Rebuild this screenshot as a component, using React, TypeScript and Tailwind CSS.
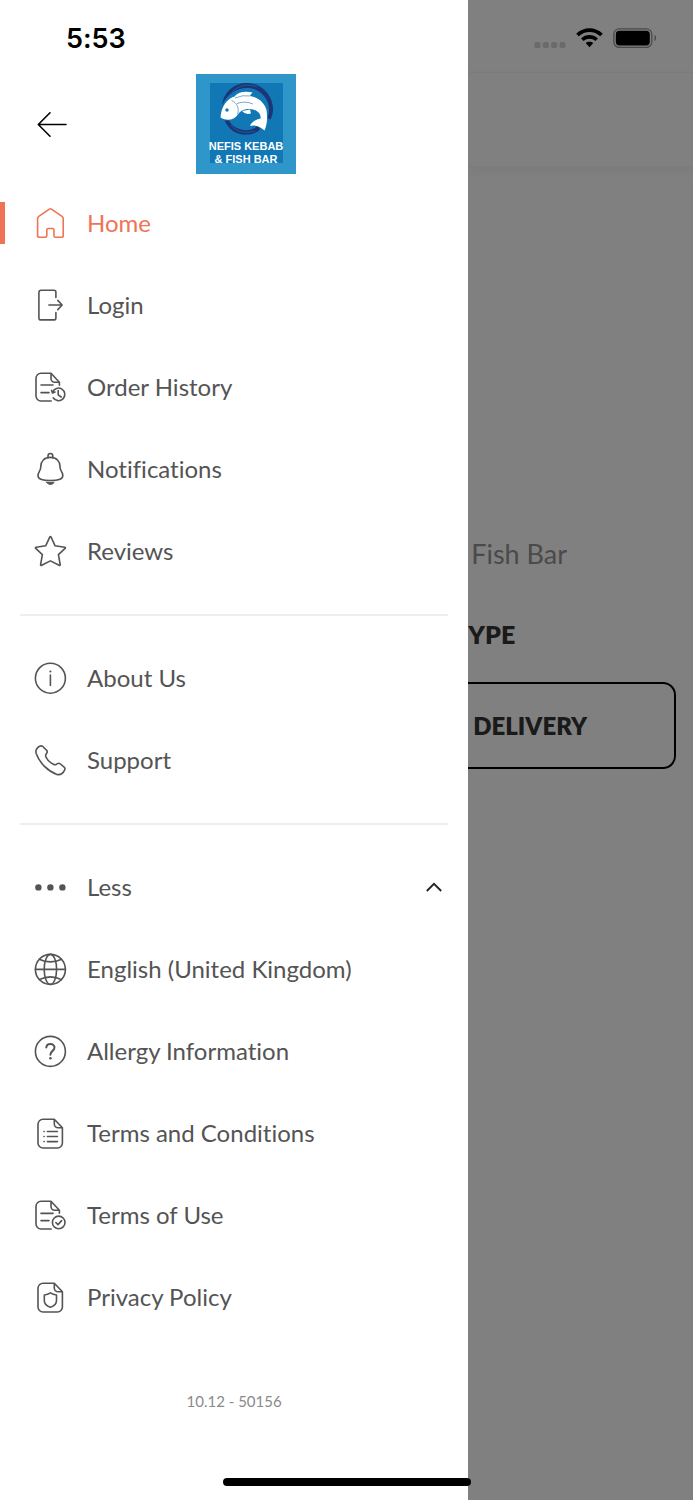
import { useState } from "react";
import type { ReactNode } from "react";

type MenuItem = {
    label: string
    icon: ReactNode
}

const foldedDoc = "M17.2 30H7A5 5 0 0 1 2 25V7.3A5 5 0 0 1 7 2.3H17L25.4 11.2V14.2M17 2.3V7.5A3.7 3.7 0 0 0 20.7 11.2H25.4"
const wholeDoc = "M20.3 2.3H9A5 5 0 0 0 4 7.3V26A5 5 0 0 0 9 31H23.4A5 5 0 0 0 28.4 26V10.8ZM20.3 2.3V7A3.8 3.8 0 0 0 24.1 10.8H28.4"

const Icon = ({ children }: { children: ReactNode }) => (
    <svg viewBox="0 0 32 32" className="w-8 h-8 shrink-0 overflow-visible" fill="none" stroke="currentColor" strokeWidth="1.6" strokeLinecap="round" strokeLinejoin="round" aria-hidden="true">
        {children}
    </svg>
)

const HomeIcon = () => (
    <Icon>
        <path d="M15.3 2.2Q16.4 1.4 17.5 2.2L28 9.4Q29.2 10.2 29.2 11.7V28.5Q29.2 30.3 27.5 30.3H21.5Q20 30.3 20 28.8V23Q20 21.5 18.5 21.5H14.3Q12.8 21.5 12.8 23V28.8Q12.8 30.3 11.3 30.3H5.3Q3.6 30.3 3.6 28.5V11.7Q3.6 10.2 4.8 9.4Z"/>
    </Icon>
)

const LoginIcon = () => (
    <Icon>
        <path d="M21.9 8.5V3.3A2 2 0 0 0 19.9 1.3H6.9A2 2 0 0 0 4.9 3.3V28.9A2 2 0 0 0 6.9 30.9H19.9A2 2 0 0 0 21.9 28.9V23.6"/>
        <path d="M14.9 16H28M23.8 11.4L28.1 16L23.8 20.6"/>
    </Icon>
)

const HistoryIcon = () => (
    <Icon>
        <path d={foldedDoc}/>
        <path d="M7 14H19M7 21.6H15"/>
        <path d="M18.6 21.2A6.3 6.3 0 1 1 19.2 26.8M17.6 19.4L18.5 21.9L21 21.1M24.2 19.5V23.8L27.2 26"/>
    </Icon>
)

const BellIcon = () => (
    <Icon>
        <path d="M14 4.8V2.9A2.4 2.4 0 0 1 18.8 2.9V4.8"/>
        <path d="M16.4 4.4C10.3 4.4 6.8 8.4 6.8 13.4C6.8 18.5 4 18.6 4 22.7C4 26 7.6 27.5 16.4 27.5C25.2 27.5 28.8 26 28.8 22.7C28.8 18.6 26 18.5 26 13.4C26 8.4 22.5 4.4 16.4 4.4Z"/>
        <path d="M12.6 29.4H20.2Q18.6 31.4 16.4 31.4Q14.2 31.4 12.6 29.4Z" fill="currentColor" strokeWidth="1"/>
    </Icon>
)

const StarIcon = () => (
    <Icon>
        <path d="M15.7 2.2Q16.4 0.9 17.1 2.2L21.1 10.8L30.7 12.2Q31.9 12.5 31.1 13.4L24.4 19.7L26.2 29.5Q26.3 30.8 25.1 30.3L16.4 25.9L7.7 30.3Q6.5 30.8 6.6 29.5L8.4 19.7L1.7 13.4Q0.9 12.5 2.1 12.2L11.7 10.8Z"/>
    </Icon>
)

const InfoIcon = () => (
    <Icon>
        <circle cx="16.4" cy="16.2" r="15"/>
        <path d="M16.4 13V23.4"/>
        <circle cx="16.4" cy="9.5" r="1.1" fill="currentColor" stroke="none"/>
    </Icon>
)

const PhoneIcon = () => (
    <Icon>
        <path d="M5.6 2.2Q7.4 1.3 8.8 2.5L12.5 6.2Q13.8 7.4 12.8 9L11.9 10.6Q11.3 11.7 12 13.1C13.5 16.2 16 18.6 19.4 20.3Q20.7 21 21.9 20.5L23.6 19.6Q25.2 18.8 26.4 20L30.4 23.4Q31.5 24.5 30.6 26.1C29 29.3 26.3 31.4 22.9 30.4C14 27.2 5.6 19 2.3 9.7C1.3 6.6 2.6 3.9 5.6 2.2Z"/>
    </Icon>
)

const DotsIcon = () => (
    <Icon>
        <g fill="currentColor" stroke="none">
            <circle cx="4.4" cy="16.4" r="3.2"/>
            <circle cx="16.4" cy="16.4" r="3.2"/>
            <circle cx="28.4" cy="16.4" r="3.2"/>
        </g>
    </Icon>
)

const GlobeIcon = () => (
    <Icon>
        <circle cx="16.4" cy="16.4" r="15"/>
        <ellipse cx="16.4" cy="16.4" rx="6.2" ry="15"/>
        <path d="M1.4 16.4H31.4M5.2 6.2Q16.4 11.6 27.6 6.2M5.2 26.6Q16.4 21.2 27.6 26.6"/>
    </Icon>
)

const QuestionIcon = () => (
    <Icon>
        <circle cx="16.4" cy="16.4" r="15"/>
        <path d="M12.3 12.4C12.5 10.4 14.2 9 16.4 9C18.7 9 20.5 10.5 20.5 12.6C20.5 16 16.4 15.8 16.4 19.7" strokeWidth="2"/>
        <circle cx="16.4" cy="23.3" r="1.3" fill="currentColor" stroke="none"/>
    </Icon>
)

const ListDocIcon = () => (
    <Icon>
        <path d={wholeDoc}/>
        <path d="M13.4 14.5H23.4M13.4 19.5H23.4M13.4 24.6H23.4M10 14.5H10.2M10 19.5H10.2M10 24.6H10.2"/>
    </Icon>
)

const CheckDocIcon = () => (
    <Icon>
        <path d={foldedDoc}/>
        <path d="M7 14.4H19M7 21.6H15"/>
        <circle cx="24.7" cy="23.4" r="6.3"/>
        <path d="M21.9 23.6L24 25.6L27.6 21.6"/>
    </Icon>
)

const ShieldDocIcon = () => (
    <Icon>
        <path d={wholeDoc}/>
        <path d="M16.4 11.9Q19 13.8 22.5 14V19.5C22.5 23 20.3 25 16.4 26.3C12.5 25 10.3 23 10.3 19.5V14Q13.8 13.8 16.4 11.9Z"/>
    </Icon>
)

const Logo = () => (
    <div className="relative w-[100px] h-[100px] shrink-0 bg-[#2e96c8] flex flex-col justify-end pb-2">
        <svg viewBox="0 0 100 100" className="absolute inset-0 w-full h-full" aria-hidden="true">
            <rect x="14" y="9" width="73" height="80" fill="#1178b5"/>
            {/* brush ring */}
            <path d="M26 31C28 17 39 9 51 9C65 9 77 21 77 35C77 39 76 43 74.5 45.5L71.5 44C74 38 73.5 30 69.5 24C65 17 58 13.5 50 14C39 14.5 31 21 26 31Z" fill="#1c3576"/>
            <path d="M28.5 46.5C33 57 43 61.5 51 60.5C57 60.5 61 58.5 64 55.5L62.5 51.5C57 56 51 57 45 55.5C39 54 35 50.5 33 46.5Z" fill="#1c3576"/>
            <path d="M36 18C43 11 52 9 61 13" fill="none" stroke="#1178b5" strokeWidth="0.6"/>
            <path d="M35 51C40 58 49 60 59 57" fill="none" stroke="#1178b5" strokeWidth="0.6"/>
            {/* fish */}
            <path d="M24.5 43.5C25 33 31 24.5 38.5 22.5C41.5 18.5 48 16.5 56.5 18.5Q54.5 20 54 22C63 23.5 68.5 29 70.5 36C71.5 42 71.5 50 68.5 56.5C65 53.5 59 50 54 52C55.5 47.5 60 45.5 64.5 44.5C65.5 40 61 35.5 53.5 35C48 35 44.5 36.5 42 40.5C38 46 31 47.5 24.5 43.5Z" fill="#fff"/>
            <path d="M46 37Q49 41 55 39.5L54 35.5Z" fill="#fff"/>
            <path d="M35.5 26.5C41 28.5 43.5 34 41.5 40.5M39 24Q47 20.5 54 22M41 29.5Q49 26.5 57 30" fill="none" stroke="#1178b5" strokeWidth="0.6"/>
            <circle cx="31" cy="36" r="1.7" fill="#1178b5"/>
        </svg>
        <p className="relative text-white text-center font-bold text-[11px] leading-[13px] font-['Liberation_Sans',sans-serif]">NEFIS KEBAB<br/>&amp; FISH BAR</p>
    </div>
)

const mainItems: MenuItem[] = [
    { label: "Home", icon: <HomeIcon/> },
    { label: "Login", icon: <LoginIcon/> },
    { label: "Order History", icon: <HistoryIcon/> },
    { label: "Notifications", icon: <BellIcon/> },
    { label: "Reviews", icon: <StarIcon/> },
]

const helpItems: MenuItem[] = [
    { label: "About Us", icon: <InfoIcon/> },
    { label: "Support", icon: <PhoneIcon/> },
]

const moreItems: MenuItem[] = [
    { label: "English (United Kingdom)", icon: <GlobeIcon/> },
    { label: "Allergy Information", icon: <QuestionIcon/> },
    { label: "Terms and Conditions", icon: <ListDocIcon/> },
    { label: "Terms of Use", icon: <CheckDocIcon/> },
    { label: "Privacy Policy", icon: <ShieldDocIcon/> },
]

const MenuList = ({ items, selected, onSelect }: { items: MenuItem[], selected: string, onSelect: (label: string) => void }) => (
    <ul>
        {items.map((item) => (
            <li key={item.label}>
                <a href="#" onClick={() => onSelect(item.label)} className={item.label == selected ? "flex items-center h-[82px] text-[#ef7455]" : "flex items-center h-[82px] text-[#545454]"}>
                    <span className={item.label == selected ? "w-[5px] h-[42px] bg-[#ef7455]" : "w-[5px] h-[42px]"}/>
                    <span className="ml-[29px] mr-[21px]">{item.icon}</span>
                    <span>{item.label}</span>
                </a>
            </li>
        ))}
    </ul>
)

const Divider = () => (
    <div className="h-[45px] px-5 flex items-center">
        <hr className="w-full border-0 h-0.5 bg-[#eeeeee]"/>
    </div>
)

const App = () => {
    const [selected, setSelected] = useState("Home")
    const [expanded, setExpanded] = useState(true)

    return (
        <div className="relative min-h-screen grid grid-cols-[25fr_12fr] font-[Lato,sans-serif]">
            <nav className="bg-white text-2xl [font-variant-ligatures:none]">
                <div className="h-[74px] pt-1 pl-[66px] flex items-center">
                    <time className="text-[27px] leading-8 font-semibold text-black font-[Inter,sans-serif]">5:53</time>
                </div>
                <div className="flex items-center pl-9 gap-32 mb-2">
                    <button type="button" aria-label="Back" className="text-black">
                        <svg viewBox="0 0 32 32" className="w-8 h-8" fill="none" stroke="currentColor" strokeWidth="1.6" strokeLinecap="round" strokeLinejoin="round">
                            <path d="M30 16.5H2.5M14 4.8L2.3 16.5L14 28.2"/>
                        </svg>
                    </button>
                    <Logo/>
                </div>

                <MenuList items={mainItems} selected={selected} onSelect={setSelected}/>
                <Divider/>
                <MenuList items={helpItems} selected={selected} onSelect={setSelected}/>
                <Divider/>
                <button type="button" onClick={() => setExpanded(!expanded)} className="w-full h-[82px] pl-[34px] pr-[26px] flex items-center text-[#545454]">
                    <DotsIcon/>
                    <span className="ml-[21px]">{expanded ? "Less" : "More"}</span>
                    <svg viewBox="0 0 16 10" className="w-4 h-[10px] ml-auto" fill="none" stroke="#222" strokeWidth="1.8" aria-hidden="true">
                        <path d={expanded ? "M0.8 9L8 1.8L15.2 9" : "M0.8 1L8 8.2L15.2 1"}/>
                    </svg>
                </button>
                {expanded && <MenuList items={moreItems} selected={selected} onSelect={setSelected}/>}
                <p className="mt-[51px] text-center text-[15px] leading-6 text-[#8a8a8a]">10.12 - 50156</p>
            </nav>

            <main className="bg-[#808080] overflow-hidden">
                <div className="h-[73px] pt-1 pr-9 flex items-center justify-end gap-[10px] border-b border-[#7d7d7d]">
                    <svg viewBox="0 0 32 20" className="w-8 h-5" fill="#6a6a6a" aria-hidden="true">
                        <rect x="0.5" y="14" width="6" height="6" rx="1.8"/>
                        <rect x="8.8" y="14" width="6" height="6" rx="1.8"/>
                        <rect x="17.2" y="14" width="6" height="6" rx="1.8"/>
                        <rect x="25.5" y="14" width="6" height="6" rx="1.8"/>
                    </svg>
                    <svg viewBox="0 0 27 20" className="w-[27px] h-5" aria-hidden="true">
                        <path d="M0.2 5.7C7.6 -1.7 19.4 -1.7 26.8 5.7L24.2 8.3C18.2 2.5 8.8 2.5 2.8 8.3Z"/>
                        <path d="M5 10.4C9.7 5.9 17.3 5.9 22 10.4L19.3 13.1C16.1 10.1 10.9 10.1 7.7 13.1Z"/>
                        <path d="M9.7 15.1C11.8 13.2 15.2 13.2 17.3 15.1L13.5 19.3Z"/>
                    </svg>
                    <svg viewBox="0 0 44 20" className="w-11 h-5" aria-hidden="true">
                        <rect x="0.8" y="0.8" width="38" height="18.6" rx="5.4" fill="none" stroke="#4a4a4a" strokeWidth="1.3"/>
                        <rect x="2.8" y="2.8" width="34" height="14.6" rx="3.6"/>
                        <path d="M41.5 6.8C43.6 7.8 43.6 12.2 41.5 13.2Z" fill="#4a4a4a"/>
                    </svg>
                </div>
                <div className="h-[93px] shadow-[0_4px_10px_rgba(0,0,0,0.05)]"/>
                <h1 className="mt-[372px] pl-[3px] text-[27px] leading-8 text-[#4a4a4a]">Fish Bar</h1>
                <h2 className="mt-12 text-[25px] leading-8 font-extrabold text-[#1a1a1a]">YPE</h2>
                <div className="mt-8 pr-[17px]">
                    <button type="button" className="w-full h-[87px] pl-[5px] text-left text-2xl font-extrabold text-[#1a1a1a] border-2 border-l-0 border-black rounded-r-[13px]">DELIVERY</button>
                </div>
            </main>

            <div className="absolute bottom-[14px] left-1/2 -translate-x-1/2 w-[248px] h-2 rounded-full bg-black"/>
        </div>
    );
}

export default App;
